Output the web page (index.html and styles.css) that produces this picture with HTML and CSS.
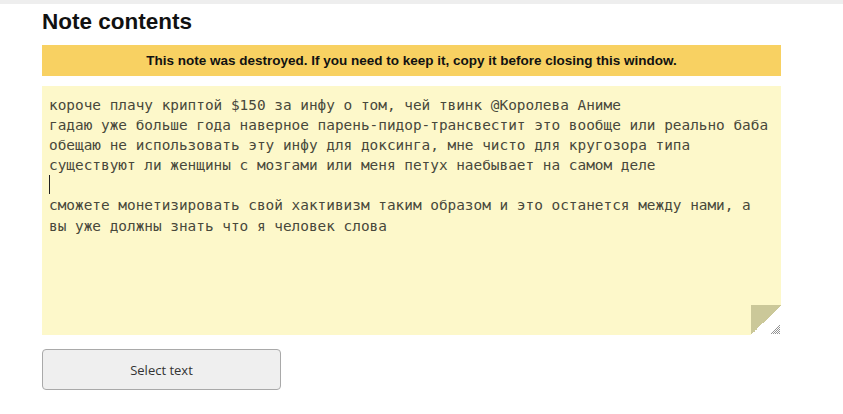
FILE: index.html
```html
<!DOCTYPE html>
<html lang="ru">
<head>
<meta charset="utf-8">
<link rel="stylesheet" href="styles.css">
</head>
<body>
<div class="topbar"></div>
<main class="page">
  <h1 class="title">Note contents</h1>
  <div class="notice">This note was destroyed. If you need to keep it, copy it before closing this window.</div>
  <div class="note">
    <div class="note-text">короче плачу криптой $150 за инфу о том, чей твинк @Королева Аниме
гадаю уже больше года наверное парень-пидор-трансвестит это вообще или реально баба
обещаю не использовать эту инфу для доксинга, мне чисто для кругозора типа
существуют ли женщины с мозгами или меня петух наебывает на самом деле
<span class="caret"></span>
сможете монетизировать свой хактивизм таким образом и это останется между нами, а
вы уже должны знать что я человек слова</div>
    <div class="fold"></div>
    <svg class="grip" width="10" height="10" viewBox="0 0 10 10">
      <path d="M10 1 L1 10 M10 3 L3 10 M10 5 L5 10 M10 7 L7 10 M10 9 L9 10" stroke="#777" stroke-width="0.8" fill="none"/>
    </svg>
  </div>
  <button class="select-btn" type="button">Select text</button>
</main>
</body>
</html>
```
FILE: styles.css
```css
html, body {
  margin: 0;
  padding: 0;
  background: #ffffff;
}
.topbar {
  height: 4px;
  background: #eeeeee;
}
.page {
  padding: 0 62px 0 42px;
  display: flex;
  flex-direction: column;
}
.title {
  margin: 3px 0 0 0;
  font-family: "Liberation Sans", Arial, sans-serif;
  font-weight: bold;
  font-size: 22.5px;
  line-height: 30px;
  color: #111;
}
.notice {
  margin-top: 8px;
  height: 31px;
  background: #f8d162;
  color: #111;
  font-family: "Liberation Sans", Arial, sans-serif;
  font-weight: bold;
  font-size: 13.5px;
  display: flex;
  align-items: center;
  justify-content: center;
}
.note {
  position: relative;
  margin-top: 10px;
  height: 249px;
  background: #fdf8ca;
}
.note-text {
  padding: 9px 7px 0 7px;
  font-family: "DejaVu Sans Mono", monospace;
  font-size: 14.4px;
  line-height: 20.1px;
  color: #48483b;
  white-space: pre-wrap;
}
.caret {
  display: inline-block;
  width: 1px;
  height: 19px;
  background: #222;
  vertical-align: -4px;
}
.fold {
  position: absolute;
  right: 0;
  bottom: 0;
  width: 30px;
  height: 30px;
  background: linear-gradient(to top left, #ffffff 0 50%, #cbc899 50% 100%);
}
.grip {
  position: absolute;
  right: 1px;
  bottom: 1px;
}
.select-btn {
  margin-top: 14px;
  width: 239px;
  height: 41px;
  background: #efefef;
  border: 1px solid #a9a9a9;
  border-radius: 4px;
  font-family: "Open Sans", sans-serif;
  font-size: 13px;
  color: #333;
  cursor: pointer;
}
```
